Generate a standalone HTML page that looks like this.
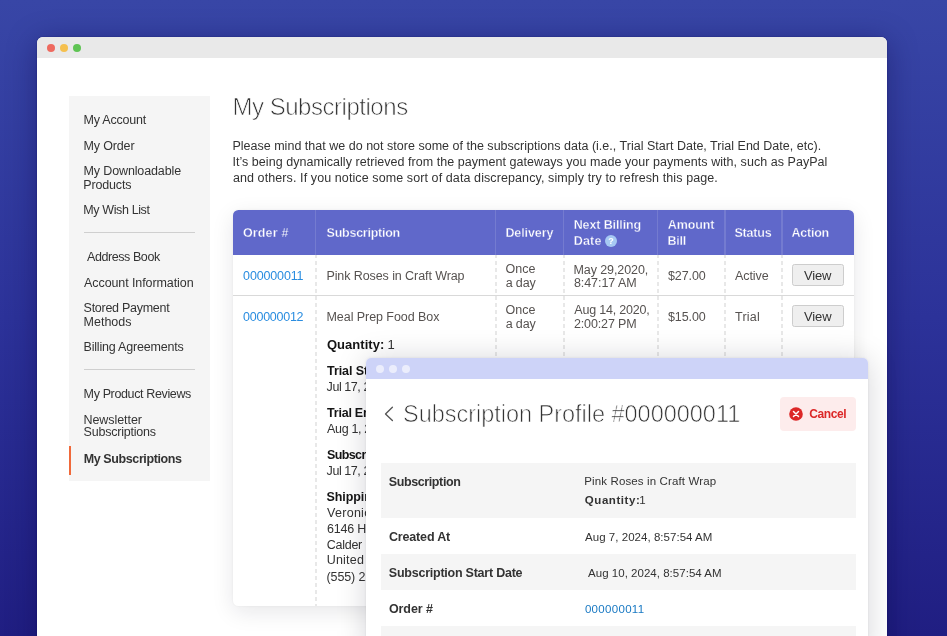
<!DOCTYPE html>
<html lang="en">
<head>
<meta charset="utf-8">
<title>My Subscriptions</title>
<style>
*{box-sizing:border-box;margin:0;padding:0}
html,body{width:947px;height:636px;overflow:hidden}
body{position:relative;font-family:"Liberation Sans",sans-serif;color:#333;
  background:linear-gradient(180deg,#3846a6 0%,#2c3299 50%,#201e82 100%);}
#root{position:absolute;left:0;top:0;width:947px;height:636px;overflow:hidden;will-change:transform}
.abs{position:absolute}
.t{position:absolute;white-space:nowrap;font-family:"Liberation Sans",sans-serif;color:#333}
/* main browser window */
#win{position:absolute;left:37px;top:37px;width:850px;height:620px;background:#fff;border-radius:6px 6px 0 0;
  box-shadow:0 0 1.5px rgba(10,8,70,.6),0 5px 30px rgba(12,8,70,.40);}
#win .bar{position:absolute;left:0;top:0;width:100%;height:21px;background:#e9e9e9;border-radius:6px 6px 0 0}
.dot{position:absolute;width:8px;height:8px;border-radius:50%}
/* sidebar */
#side{position:absolute;left:69px;top:96px;width:141px;height:385px;background:#f5f5f5}
.hr{position:absolute;left:84.3px;width:110.6px;height:1px;background:#cfcfcf}
#cur{position:absolute;left:69px;top:446px;width:2px;height:29px;background:#f0693a}
/* table */
#tbl{position:absolute;left:233px;top:210px;width:621px;height:395.6px;background:#fff;border-radius:5.5px;
  box-shadow:0 6px 22px rgba(20,20,40,.10),0 0 3px rgba(20,20,40,.06);}
#tclip{position:absolute;left:233px;top:210px;width:621px;height:395.6px;border-radius:5.5px;overflow:hidden}
#tclip .in{position:absolute;left:-233px;top:-210px;width:947px;height:636px}
#thead{position:absolute;left:233px;top:210px;width:621px;height:45px;background:#6068ca}
.vh{position:absolute;top:210px;width:1.4px;height:45px;background:rgba(255,255,255,.13)}
.vd{position:absolute;top:253.6px;width:1.6px;height:352px;background:repeating-linear-gradient(180deg,#e8e8e8 0 3.7px,transparent 3.7px 7px)}
.rowline{position:absolute;left:233px;top:294.7px;width:621px;height:1px;background:#d9d9d9}
.btn{position:absolute;left:792px;width:52px;height:21.5px;background:#efefef;border:1px solid #cdcdcd;border-radius:2.5px}
#q{position:absolute;left:605px;top:235.1px;width:12.2px;height:12.2px;border-radius:50%;background:#a6c9f3;color:#fff;
  font-size:9px;font-weight:700;line-height:12px;text-align:center}
/* modal */
#modal{position:absolute;left:366px;top:358px;width:502px;height:300px;background:#fff;border-radius:5px 5px 0 0;
  box-shadow:0 1px 30px rgba(10,10,30,.17),0 0 3px rgba(10,10,30,.08);}
#modal .bar{position:absolute;left:0;top:0;width:100%;height:21px;background:#cdd3f8;border-radius:5px 5px 0 0}
.mrow{position:absolute;left:381px;width:475px;background:#f5f5f5}
#cancel{position:absolute;left:780px;top:397px;width:75.7px;height:33.6px;background:#fdecec;border-radius:4px}
</style>
</head>
<body>
<div id="root">

<div id="win">
  <div class="bar"></div>
  <div class="dot" style="left:10px;top:7px;background:#ee6a5f"></div>
  <div class="dot" style="left:23px;top:7px;background:#f5c04f"></div>
  <div class="dot" style="left:36px;top:7px;background:#5fc454"></div>
</div>

<div id="side"></div>
<div class="hr" style="top:232px"></div>
<div class="hr" style="top:369px"></div>
<div id="cur"></div>

<span class="t" style="left:83.5px;top:113px;font-size:12.5px;line-height:15px;letter-spacing:-0.196px;">My Account</span>
<span class="t" style="left:83.5px;top:139px;font-size:12.5px;line-height:15px;letter-spacing:-0.143px;">My Order</span>
<span class="t" style="left:83.5px;top:164px;font-size:12.5px;line-height:15px;letter-spacing:-0.127px;">My Downloadable</span>
<span class="t" style="left:83.3px;top:178px;font-size:12.5px;line-height:15px;letter-spacing:-0.163px;">Products</span>
<span class="t" style="left:83.3px;top:203px;font-size:12.5px;line-height:15px;letter-spacing:-0.380px;">My Wish List</span>
<span class="t" style="left:87.0px;top:250px;font-size:12.5px;line-height:15px;letter-spacing:-0.422px;">Address Book</span>
<span class="t" style="left:84.1px;top:276px;font-size:12.5px;line-height:15px;letter-spacing:-0.093px;">Account Information</span>
<span class="t" style="left:83.6px;top:301px;font-size:12.5px;line-height:15px;letter-spacing:-0.274px;">Stored Payment</span>
<span class="t" style="left:83.5px;top:315px;font-size:12.5px;line-height:15px;letter-spacing:0.014px;">Methods</span>
<span class="t" style="left:83.5px;top:340px;font-size:12.5px;line-height:15px;letter-spacing:-0.191px;">Billing Agreements</span>
<span class="t" style="left:83.6px;top:387px;font-size:12.5px;line-height:15px;letter-spacing:-0.366px;">My Product Reviews</span>
<span class="t" style="left:83.5px;top:413px;font-size:12.5px;line-height:15px;letter-spacing:-0.061px;">Newsletter</span>
<span class="t" style="left:83.6px;top:425px;font-size:12.5px;line-height:15px;letter-spacing:-0.215px;">Subscriptions</span>
<span class="t" style="left:83.7px;top:452px;font-size:12.5px;line-height:15px;letter-spacing:-0.393px;font-weight:700;">My Subscriptions</span>
<span class="t" style="left:232.4px;top:92px;font-size:24px;line-height:29px;letter-spacing:-0.466px;-webkit-text-stroke:0.7px #fff;">My Subscriptions</span>
<span class="t" style="left:232.4px;top:139px;font-size:12.5px;line-height:15px;letter-spacing:0.015px;">Please mind that we do not store some of the subscriptions data (i.e., Trial Start Date, Trial End Date, etc).</span>
<span class="t" style="left:232.4px;top:155px;font-size:12.5px;line-height:15px;letter-spacing:0.046px;">It’s being dynamically retrieved from the payment gateways you made your payments with, such as PayPal</span>
<span class="t" style="left:232.9px;top:171px;font-size:12.5px;line-height:15px;letter-spacing:0.097px;">and others. If you notice some sort of data discrepancy, simply try to refresh this page.</span>

<div id="tbl"></div>
<div id="tclip"><div class="in">
  <div class="vd" style="left:315px"></div>
  <div class="vd" style="left:495px"></div>
  <div class="vd" style="left:563px"></div>
  <div class="vd" style="left:657px"></div>
  <div class="vd" style="left:724.3px"></div>
  <div class="vd" style="left:781.3px"></div>
  <div id="thead"></div>
  <div class="vh" style="left:315px"></div>
  <div class="vh" style="left:495px"></div>
  <div class="vh" style="left:563px"></div>
  <div class="vh" style="left:657px"></div>
  <div class="vh" style="left:724.3px"></div>
  <div class="vh" style="left:781.3px"></div>
  <div class="rowline"></div>
  <div class="btn" style="top:264.1px"></div>
  <div class="btn" style="top:305.2px"></div>
  <div id="q">?</div>
<span class="t" style="left:242.9px;top:226px;font-size:12.5px;line-height:15px;letter-spacing:0.165px;font-weight:700;color:#fff;-webkit-text-stroke:0.3px #6068ca;">Order #</span>
<span class="t" style="left:326.6px;top:226px;font-size:12.5px;line-height:15px;letter-spacing:-0.257px;font-weight:700;color:#fff;-webkit-text-stroke:0.3px #6068ca;">Subscription</span>
<span class="t" style="left:505.4px;top:226px;font-size:12.5px;line-height:15px;letter-spacing:-0.098px;font-weight:700;color:#fff;-webkit-text-stroke:0.3px #6068ca;">Delivery</span>
<span class="t" style="left:573.7px;top:218px;font-size:12.5px;line-height:15px;letter-spacing:-0.119px;font-weight:700;color:#fff;-webkit-text-stroke:0.3px #6068ca;">Next Billing</span>
<span class="t" style="left:573.7px;top:234px;font-size:12.5px;line-height:15px;letter-spacing:0.216px;font-weight:700;color:#fff;-webkit-text-stroke:0.3px #6068ca;">Date</span>
<span class="t" style="left:667.8px;top:218px;font-size:12.5px;line-height:15px;letter-spacing:-0.133px;font-weight:700;color:#fff;-webkit-text-stroke:0.3px #6068ca;">Amount</span>
<span class="t" style="left:667.5px;top:234px;font-size:12.5px;line-height:15px;letter-spacing:-0.224px;font-weight:700;color:#fff;-webkit-text-stroke:0.3px #6068ca;">Bill</span>
<span class="t" style="left:734.4px;top:226px;font-size:12.5px;line-height:15px;letter-spacing:-0.194px;font-weight:700;color:#fff;-webkit-text-stroke:0.3px #6068ca;">Status</span>
<span class="t" style="left:791.6px;top:226px;font-size:12.5px;line-height:15px;letter-spacing:-0.257px;font-weight:700;color:#fff;-webkit-text-stroke:0.3px #6068ca;">Action</span>
<span class="t" style="left:243.1px;top:269px;font-size:12.5px;line-height:15px;letter-spacing:-0.146px;color:#2a8de0;">000000011</span>
<span class="t" style="left:326.4px;top:269px;font-size:12.5px;line-height:15px;letter-spacing:-0.083px;color:#565250;">Pink Roses in Craft Wrap</span>
<span class="t" style="left:505.6px;top:262px;font-size:12.5px;line-height:15px;letter-spacing:-0.013px;color:#565250;">Once</span>
<span class="t" style="left:505.7px;top:276px;font-size:12.5px;line-height:15px;letter-spacing:-0.131px;color:#565250;">a day</span>
<span class="t" style="left:573.5px;top:263px;font-size:12.5px;line-height:15px;letter-spacing:-0.087px;color:#565250;">May 29,2020,</span>
<span class="t" style="left:573.9px;top:276px;font-size:12.5px;line-height:15px;letter-spacing:-0.051px;color:#565250;">8:47:17 AM</span>
<span class="t" style="left:667.9px;top:269px;font-size:12.5px;line-height:15px;letter-spacing:-0.077px;color:#565250;">$27.00</span>
<span class="t" style="left:734.9px;top:269px;font-size:12.5px;line-height:15px;letter-spacing:-0.026px;color:#565250;">Active</span>
<span class="t" style="left:804.0px;top:268px;font-size:13px;line-height:16px;letter-spacing:-0.152px;">View</span>
<span class="t" style="left:243.1px;top:310px;font-size:12.5px;line-height:15px;letter-spacing:-0.267px;color:#2a8de0;">000000012</span>
<span class="t" style="left:326.5px;top:310px;font-size:12.5px;line-height:15px;letter-spacing:-0.061px;color:#565250;">Meal Prep Food Box</span>
<span class="t" style="left:505.6px;top:303px;font-size:12.5px;line-height:15px;letter-spacing:-0.013px;color:#565250;">Once</span>
<span class="t" style="left:505.7px;top:317px;font-size:12.5px;line-height:15px;letter-spacing:-0.131px;color:#565250;">a day</span>
<span class="t" style="left:574.3px;top:303px;font-size:12.5px;line-height:15px;letter-spacing:-0.202px;color:#565250;">Aug 14, 2020,</span>
<span class="t" style="left:573.9px;top:317px;font-size:12.5px;line-height:15px;letter-spacing:-0.118px;color:#565250;">2:00:27 PM</span>
<span class="t" style="left:667.9px;top:310px;font-size:12.5px;line-height:15px;letter-spacing:-0.077px;color:#565250;">$15.00</span>
<span class="t" style="left:735.0px;top:310px;font-size:12.5px;line-height:15px;letter-spacing:0.249px;color:#565250;">Trial</span>
<span class="t" style="left:804.1px;top:309px;font-size:13px;line-height:16px;letter-spacing:-0.166px;">View</span>
<span class="t" style="left:326.9px;top:337px;font-size:13px;line-height:16px;letter-spacing:0.051px;font-weight:700;color:#151515;">Quantity:</span>
<span class="t" style="left:387.6px;top:337px;font-size:13px;line-height:16px;">1</span>
<span class="t" style="left:327.1px;top:364px;font-size:12.5px;line-height:15px;letter-spacing:-0.084px;font-weight:700;color:#151515;">Trial Start Date:</span>
<span class="t" style="left:326.6px;top:380px;font-size:12.5px;line-height:15px;letter-spacing:-0.433px;">Jul 17, 2020</span>
<span class="t" style="left:327.1px;top:406px;font-size:12.5px;line-height:15px;letter-spacing:-0.237px;font-weight:700;color:#151515;">Trial End Date:</span>
<span class="t" style="left:327.1px;top:422px;font-size:12.5px;line-height:15px;letter-spacing:-0.354px;">Aug 1, 2020</span>
<span class="t" style="left:327.0px;top:448px;font-size:12.5px;line-height:15px;letter-spacing:-0.626px;font-weight:700;color:#151515;">Subscription Start Date:</span>
<span class="t" style="left:326.6px;top:464px;font-size:12.5px;line-height:15px;letter-spacing:-0.433px;">Jul 17, 2020</span>
<span class="t" style="left:326.6px;top:490px;font-size:12.5px;line-height:15px;letter-spacing:-0.103px;font-weight:700;color:#151515;">Shipping Address:</span>
<span class="t" style="left:327.1px;top:506px;font-size:12.5px;line-height:15px;letter-spacing:0.268px;">Veronica Costello</span>
<span class="t" style="left:327.0px;top:522px;font-size:12.5px;line-height:15px;letter-spacing:-0.183px;">6146 Honey Bluff Parkway</span>
<span class="t" style="left:326.8px;top:538px;font-size:12.5px;line-height:15px;letter-spacing:-0.275px;">Calder , Michigan, 49628-7978</span>
<span class="t" style="left:326.7px;top:553px;font-size:12.5px;line-height:15px;letter-spacing:0.213px;">United States</span>
<span class="t" style="left:326.5px;top:570px;font-size:12.5px;line-height:15px;letter-spacing:-0.114px;">(555) 229-3326</span>
</div></div>

<div id="modal">
  <div class="bar"></div>
  <div class="dot" style="left:10px;top:7px;background:#ebedfc"></div>
  <div class="dot" style="left:23px;top:7px;background:#ebedfc"></div>
  <div class="dot" style="left:36px;top:7px;background:#ebedfc"></div>
</div>
<div class="mrow" style="top:463.3px;height:54.3px"></div>
<div class="mrow" style="top:554.1px;height:35.5px"></div>
<div class="mrow" style="top:626.4px;height:20px"></div>
<div id="cancel"></div>
<svg class="abs" style="left:789.3px;top:406.6px" width="14" height="14" viewBox="0 0 14 14">
  <circle cx="7" cy="7" r="6.8" fill="#dc2828"/>
  <path d="M4.5 4.5 L9.5 9.5 M9.5 4.5 L4.5 9.5" stroke="#fff" stroke-width="1.5" stroke-linecap="round"/>
</svg>
<svg class="abs" style="left:383px;top:405px" width="12" height="18" viewBox="0 0 12 18">
  <path d="M9.4 2.3 L2.5 8.9 L9.4 15.5" fill="none" stroke="#555" stroke-width="1.35" stroke-linecap="round" stroke-linejoin="round"/>
</svg>
<span class="t" style="left:403.0px;top:400px;font-size:23.5px;line-height:28px;letter-spacing:-0.023px;-webkit-text-stroke:0.7px #fff;">Subscription Profile #000000011</span>
<span class="t" style="left:809.3px;top:407px;font-size:12px;line-height:14px;letter-spacing:-0.429px;font-weight:700;color:#dc2828;">Cancel</span>
<span class="t" style="left:388.8px;top:475px;font-size:12.5px;line-height:15px;letter-spacing:-0.396px;font-weight:700;">Subscription</span>
<span class="t" style="left:388.9px;top:530px;font-size:12.5px;line-height:15px;letter-spacing:-0.153px;font-weight:700;">Created At</span>
<span class="t" style="left:388.8px;top:566px;font-size:12.5px;line-height:15px;letter-spacing:-0.236px;font-weight:700;">Subscription Start Date</span>
<span class="t" style="left:388.9px;top:602px;font-size:12.5px;line-height:15px;letter-spacing:-0.065px;font-weight:700;">Order #</span>
<span class="t" style="left:584.3px;top:474px;font-size:11.5px;line-height:14px;letter-spacing:0.127px;">Pink Roses in Craft Wrap</span>
<span class="t" style="left:584.8px;top:493px;font-size:11.5px;line-height:14px;letter-spacing:0.564px;font-weight:700;">Quantity:</span>
<span class="t" style="left:639.2px;top:493px;font-size:11.5px;line-height:14px;">1</span>
<span class="t" style="left:585.1px;top:530px;font-size:11.5px;line-height:14px;letter-spacing:0.030px;">Aug 7, 2024, 8:57:54 AM</span>
<span class="t" style="left:588.1px;top:566px;font-size:11.5px;line-height:14px;letter-spacing:0.021px;">Aug 10, 2024, 8:57:54 AM</span>
<span class="t" style="left:584.9px;top:602px;font-size:11.5px;line-height:14px;letter-spacing:0.316px;color:#1979c3;">000000011</span>

</div>
</body>
</html>
